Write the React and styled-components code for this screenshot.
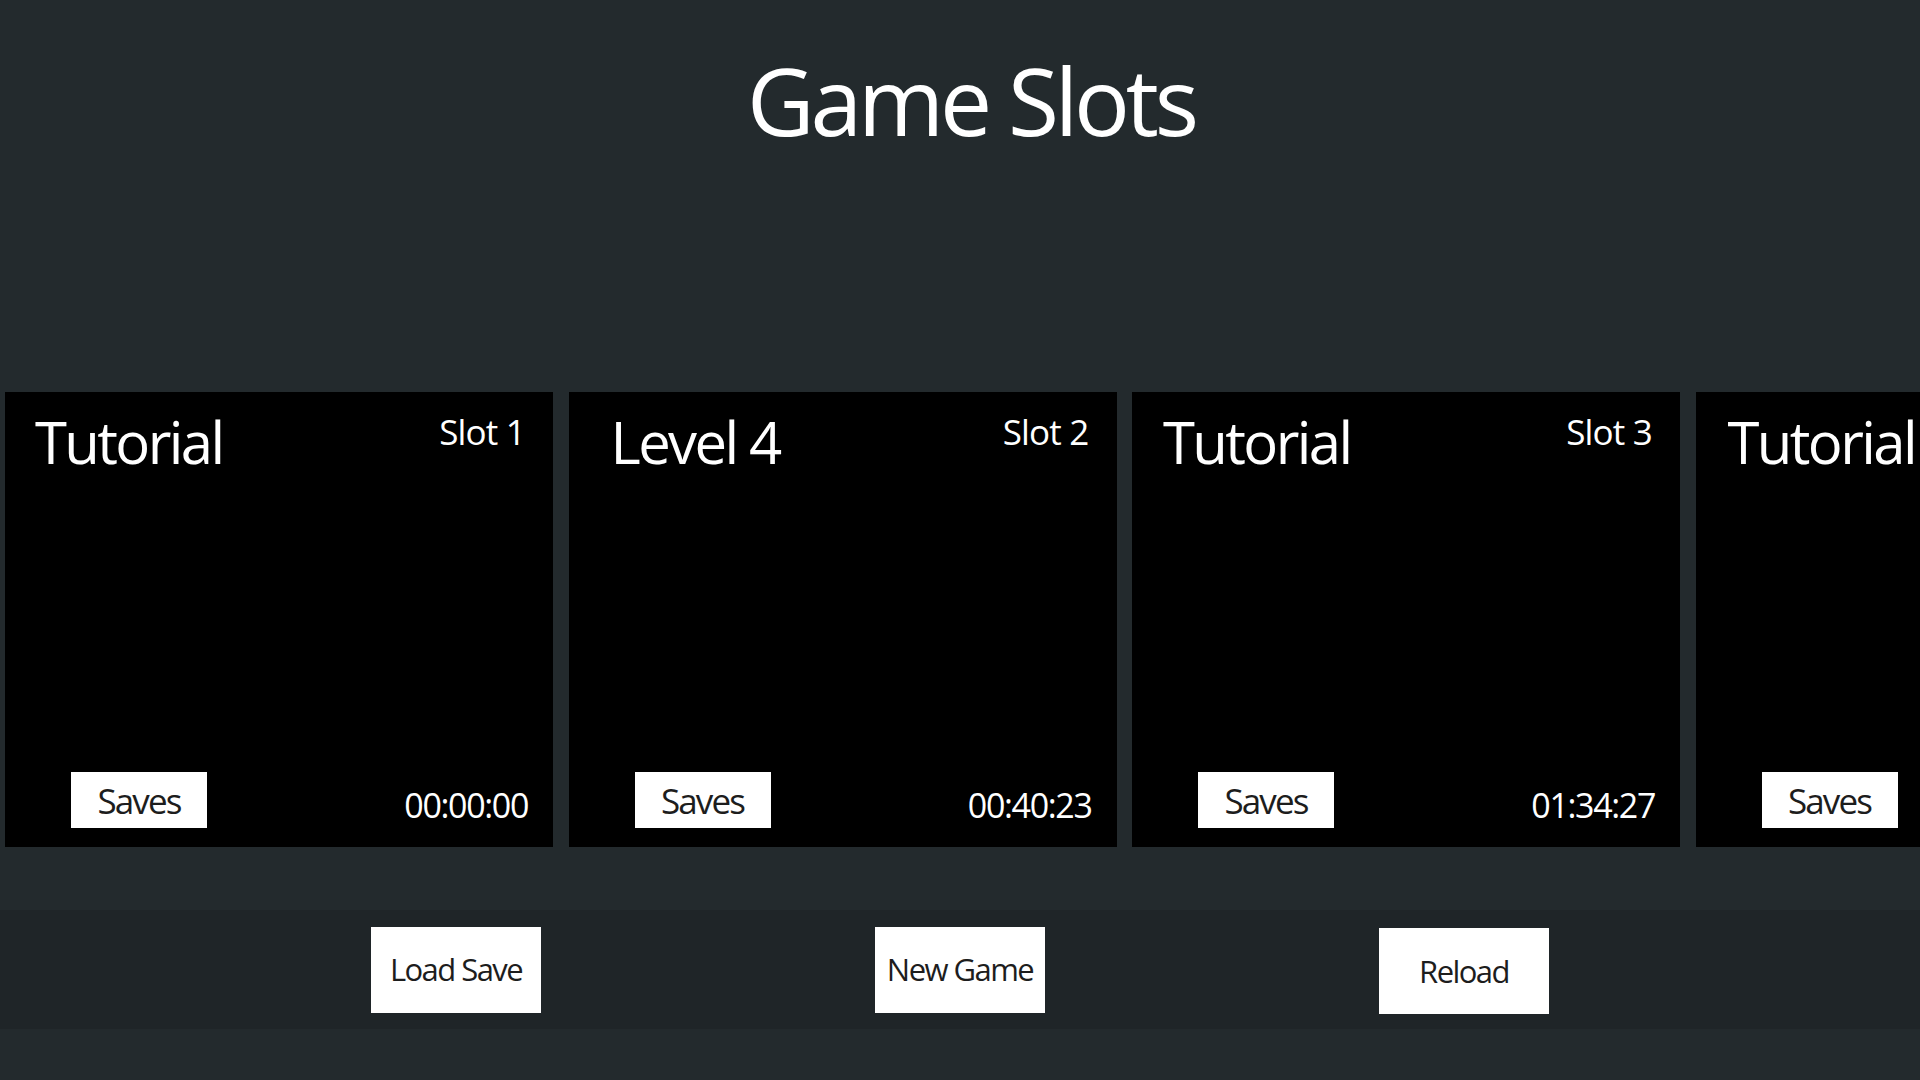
import React from "react";
import styled, { createGlobalStyle } from "styled-components";

const GlobalStyle = createGlobalStyle`
  html, body {
    margin: 0;
    padding: 0;
    background: #232a2d;
    overflow: hidden;
  }
  body {
    font-family: "Open Sans", "Noto Sans", "Liberation Sans", sans-serif;
    letter-spacing: -0.05em;
  }
  * { box-sizing: border-box; }
`;

const Page = styled.div`
  width: 1920px;
  height: 1080px;
  background: #232a2d;
  display: flex;
  flex-direction: column;
  overflow: hidden;
`;

const Title = styled.h1`
  margin: 0;
  padding: 38px 0 0 22px;
  font-size: 93px;
  line-height: 125px;
  font-weight: 400;
  letter-spacing: -0.045em;
  color: #ffffff;
  text-align: center;
`;

const SlotRow = styled.div`
  margin-top: 229px;
  padding-left: 5px;
  display: flex;
  gap: 15.5px;
  overflow: hidden;
`;

const Card = styled.div`
  flex: 0 0 548px;
  height: 455px;
  background: #000000;
  display: flex;
  flex-direction: column;
  justify-content: space-between;
  color: #ffffff;
`;

const CardTop = styled.div`
  display: flex;
  justify-content: space-between;
  align-items: flex-start;
  padding: 21px 28px 0 ${(p) => p.$indent}px;
`;

const LevelName = styled.span`
  font-size: 58px;
  line-height: 1;
  letter-spacing: -0.045em;
  white-space: nowrap;
`;

const SlotLabel = styled.span`
  font-size: 35px;
  line-height: 1;
  margin-top: 1px;
  white-space: nowrap;
`;

const CardBottom = styled.div`
  display: flex;
  justify-content: space-between;
  align-items: flex-end;
  padding: 0 25px 19px 66px;
`;

const SavesButton = styled.button`
  width: 136px;
  height: 56px;
  border: none;
  background: #ffffff;
  color: #1d1d1d;
  font-family: inherit;
  letter-spacing: -0.055em;
  font-size: 35px;
  line-height: 1;
  padding: 0;
  display: flex;
  align-items: center;
  justify-content: center;
`;

const PlayTime = styled.span`
  font-size: 34px;
  line-height: 1;
  letter-spacing: -0.04em;
  margin-bottom: 6px;
  white-space: nowrap;
`;

const ActionBar = styled.div`
  margin-top: 63px;
  height: 119px;
  background: #1f2528;
  display: flex;
  justify-content: center;
  align-items: center;
  gap: 334px;
`;

const ActionButton = styled.button`
  width: 170px;
  height: 86px;
  border: none;
  background: #ffffff;
  color: #1d1d1d;
  font-family: inherit;
  letter-spacing: -0.05em;
  font-size: 31px;
  line-height: 1;
  padding: 0;
  display: flex;
  align-items: center;
  justify-content: center;
  margin-top: ${(p) => (p.$low ? "3px" : "0")};
`;

const slots = [
  { name: "Tutorial", slot: "Slot 1", time: "00:00:00", indent: 30 },
  { name: "Level 4", slot: "Slot 2", time: "00:40:23", indent: 42 },
  { name: "Tutorial", slot: "Slot 3", time: "01:34:27", indent: 31 },
  { name: "Tutorial", slot: "Slot 4", time: "00:00:00", indent: 32 },
];

export default function App() {
  return (
    <Page>
      <GlobalStyle />
      <Title>Game Slots</Title>
      <SlotRow>
        {slots.map((s, i) => (
          <Card key={i}>
            <CardTop $indent={s.indent}>
              <LevelName>{s.name}</LevelName>
              <SlotLabel>{s.slot}</SlotLabel>
            </CardTop>
            <CardBottom>
              <SavesButton>Saves</SavesButton>
              <PlayTime>{s.time}</PlayTime>
            </CardBottom>
          </Card>
        ))}
      </SlotRow>
      <ActionBar>
        <ActionButton>Load Save</ActionButton>
        <ActionButton>New Game</ActionButton>
        <ActionButton $low>Reload</ActionButton>
      </ActionBar>
    </Page>
  );
}
